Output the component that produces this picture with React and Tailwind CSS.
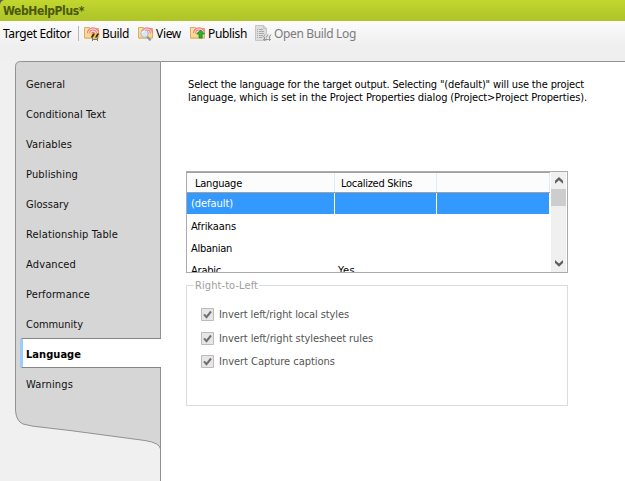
import { useLayoutEffect, useRef, useState } from "react";

// Single-line label whose tracking is adjusted so that it spans `w` pixels.
function Label({ w, className = "", children }) {
  const ref = useRef(null);
  const [spacing, setSpacing] = useState(0);
  useLayoutEffect(() => {
    const natural = ref.current.getBoundingClientRect().width;
    setSpacing((s) => s + (w - natural) / ref.current.textContent.length);
  }, [w]);
  return (
    <span ref={ref} className={`inline-block shrink-0 whitespace-pre ${className}`} style={{ letterSpacing: spacing }}>
      {children}
    </span>
  );
}

function Folder({ children }) {
  return (
    <svg className="h-4 w-4 shrink-0" viewBox="0 0 16 16">
      <path d="M.5 2.5h5l1 1h8v9.5H.5z" fill="#f8dfa2" stroke="#dcae62" />
      <path d="M2.8 8.5a6.2 6.2 0 0 1 12.4 0z" fill="#f47c80" />
      <path d="M4 8.5a5 5 0 0 1 10 0z" fill="#fde0de" />
      <path d="M5 8.5a4 4 0 0 1 8 0z" fill="#f47c80" />
      <path d="M6.1 8.5a2.9 2.9 0 0 1 5.8 0z" fill="#fde0de" />
      <path d="M7.2 8.5a1.8 1.8 0 0 1 3.6 0z" fill="#f0656b" />
      <path d="M1 8.5h13.5V13H1z" fill="#f6d88f" />
      <path d="M.5 13h14V8" fill="none" stroke="#dcae62" />
      {children}
    </svg>
  );
}

function BuildIcon() {
  return (
    <Folder>
      <path d="M8.5 12v4M13.5 12v4M8 14.5h6" stroke="#777" fill="none" />
      <path d="M7 8.5h8.5v4H7z" fill="#f5c63a" />
      <path d="M7 12l2-3.5h2L8.8 12.5H7zM11 12.5l2.2-4h2l-2.2 4z" fill="#292929" />
    </Folder>
  );
}

function ViewIcon() {
  return (
    <Folder>
      <path d="M9 11.5l3.5 4" stroke="#8f959d" strokeWidth="2" />
      <circle cx="6.5" cy="8.6" r="3.7" fill="#d9e6f3" stroke="#b4bcc6" />
      <path d="M4.3 8a2.5 2.5 0 0 1 2.4-2" fill="none" stroke="#fff" />
    </Folder>
  );
}

function PublishIcon() {
  return (
    <Folder>
      <path d="M10.5 5l4 4h-2.3v4H9V9H6.7z" fill="#23b52d" stroke="#11821b" strokeWidth=".7" />
    </Folder>
  );
}

function LogIcon() {
  return (
    <svg className="h-[17px] w-[17px] shrink-0" viewBox="0 0 17 17">
      <path d="M.5.5h8l3 3v12H.5z" fill="#dedede" stroke="#c4c4c4" />
      <path d="M8.5.5v3h3" fill="none" stroke="#c4c4c4" />
      <path d="M2 4.5h1M4 4.5h4M2 6.5h1M4 6.5h5M2 8.5h1M4 8.5h5M2 10.5h1M4 10.5h4M2 12.5h1M4 12.5h3" stroke="#aaa" />
      <path d="M8 9.5h8v3H8z" fill="#e2e2e2" />
      <path d="M8 12.5l2-3M11 12.5l2-3M14 12.5l2-3M9.5 12v4M14.5 12v4M8 14.5h8" stroke="#999" />
    </svg>
  );
}

const nav = [
  ["General", 39],
  ["Conditional Text", 80],
  ["Variables", 46],
  ["Publishing", 52],
  ["Glossary", 43],
  ["Relationship Table", 92],
  ["Advanced", 50],
  ["Performance", 64],
  ["Community", 57],
  ["Language", 55],
  ["Warnings", 47],
];

function Sidebar() {
  return (
    <nav className="relative h-[420px] w-[146px] shrink-0">
      <svg className="absolute inset-0 h-[420px] w-[146px]" viewBox="0 0 146 420">
        <path
          d="M145.5 .5H5.5Q.5 .5 .5 5.5V349Q1 360 8 363L18 365.2L55 369.5L130 379.5Q145 382 145.5 388"
          fill="#d6d6d6"
          stroke="#919191"
        />
        <path d="M145.5 .5V420" stroke="#919191" />
      </svg>
      <div className="relative flex flex-col pt-2">
        {nav.map(([name, w]) =>
          name === "Language" ? (
            <div
              key={name}
              className="-mt-px mb-px ml-[5px] flex h-[30px] items-center rounded-l-[3px] border-y border-[#858585] bg-white"
            >
              <span className="h-[28px] w-[3px] rounded-l-[2px] bg-[#99ccff]" />
              <Label w={w} className="ml-[3px] pt-[2px] font-bold text-black">{name}</Label>
            </div>
          ) : (
            <div key={name} className="flex h-[30px] items-center pl-[11px]">
              <Label w={w}>{name}</Label>
            </div>
          )
        )}
      </div>
    </nav>
  );
}

function Chevron({ down }) {
  return (
    <svg className="h-[7px] w-[8px]" viewBox="0 0 8 7">
      <path d={down ? "M0 0l4 3.6L8 0v3L4 6.8 0 3z" : "M0 6.8l4-3.6 4 3.6v-3L4 0 0 3.8z"} fill="#606060" />
    </svg>
  );
}

function LanguageList() {
  return (
    <div className="flex h-[102px] w-[382px] overflow-hidden border border-[#a9abb0] bg-white">
      <div className="w-[363px] shrink-0 overflow-hidden">
        <div className="flex h-[21px] border-b border-t border-[#a0a0a0] bg-[#fcfcfc]">
          <div className="flex w-[148px] items-center border-r border-[#dfebf7] pl-2 pt-px"><Label w={47}>Language</Label></div>
          <div className="flex w-[102px] items-center border-r border-[#dfebf7] pl-[6px] pt-px"><Label w={71}>Localized Skins</Label></div>
          <div className="grow border-r border-[#dfebf7]" />
        </div>
        <div className="flex h-[21px] w-[362px] gap-px text-white">
          <div className="flex w-[147px] items-center bg-[#3399ff] pl-[4px]"><Label w={42}>(default)</Label></div>
          <div className="w-[101px] bg-[#3399ff]" />
          <div className="grow bg-[#3399ff]" />
        </div>
        <div className="flex h-[23px] items-center pl-[4px] pt-px"><Label w={45}>Afrikaans</Label></div>
        <div className="flex h-[22px] items-center pl-[4px]"><Label w={41}>Albanian</Label></div>
        <div className="flex h-[22px] items-center pl-[4px]">
          <Label w={30}>Arabic</Label>
          <span className="ml-[117px]"><Label w={17}>Yes</Label></span>
        </div>
      </div>
      <div className="ml-px flex w-[15px] shrink-0 flex-col items-center bg-[#f0f0f0]">
        <div className="flex h-[17px] items-center"><Chevron /></div>
        <div className="h-[17px] w-full bg-[#cdcdcd]" />
        <div className="mt-auto flex h-[17px] items-center"><Chevron down /></div>
      </div>
    </div>
  );
}

function Check({ w, children }) {
  return (
    <div className="flex h-[13px] items-center gap-[5px]">
      <svg className="h-[13px] w-[13px] shrink-0" viewBox="0 0 13 13">
        <path d="M.5.5h12v12H.5z" fill="#e6e6e6" stroke="#bcbcbc" />
        <path d="M3 6.3l2.5 2.8L10 3.5" fill="none" stroke="#6f6f6f" strokeWidth="2" />
      </svg>
      <Label w={w}>{children}</Label>
    </div>
  );
}

export default function App() {
  return (
    <div className="flex h-[481px] w-[625px] flex-col overflow-hidden bg-[#f0f0f0] font-['DejaVu_Sans_Condensed','DejaVu_Sans',sans-serif] text-[11px] leading-[13px] text-[#111] [font-stretch:condensed]">
      <div className="bg-[#5a5a5a]">
        <div className="flex h-[21px] items-center rounded-tl-[5px] bg-linear-to-b from-[#c2d72e] to-[#adc328] pl-[3px] pt-px">
          <Label w={81} className="text-[12px] font-bold text-[#4b5810]">WebHelpPlus*</Label>
        </div>
      </div>
      <div className="flex h-10 shrink-0 items-start bg-linear-to-b from-[#fbfbfb] to-[#efefef] to-60% pl-[3px] font-['Noto_Sans',sans-serif] text-[12px] text-black [font-stretch:normal]">
        <div className="flex h-6 items-center">
          <Label w={68}>Target Editor</Label>
          <span className="ml-[7px] h-[15px] w-px bg-[#b8b8b8]" />
          <span className="ml-[5px] flex items-center gap-[2px]"><BuildIcon /><Label w={27}>Build</Label></span>
          <span className="ml-[9px] flex items-center gap-[2px]"><ViewIcon /><Label w={25}>View</Label></span>
          <span className="ml-[9px] flex items-center gap-[2px]"><PublishIcon /><Label w={39}>Publish</Label></span>
          <span className="ml-[8px] flex items-center gap-[2px] text-[#7c7c7c]"><LogIcon /><Label w={82}>Open Build Log</Label></span>
        </div>
      </div>
      <div className="flex h-[420px] shrink-0 pl-[15px]">
        <Sidebar />
        <main className="grow border-t border-[#919191] bg-white pl-[25px] pt-[16px]">
          <div className="flex flex-col items-start pl-[2px] text-black">
            <Label w={396}>{'Select the language for the target output. Selecting "(default)" will use the project'}</Label>
            <Label w={399}>{"language, which is set in the Project Properties dialog (Project>Project Properties)."}</Label>
          </div>
          <div className="mt-[67px] text-black"><LanguageList /></div>
          <fieldset className="mt-[6px] h-[127px] w-[382px] border border-[#dcdcdc] pl-[14px] text-[#555]">
            <legend className="-ml-[7px] px-px text-[#9e9e9e]"><Label w={63}>Right-to-Left</Label></legend>
            <div className="mt-[16px] flex flex-col gap-[10.5px]">
              <Check w={130}>Invert left/right local styles</Check>
              <Check w={154}>Invert left/right stylesheet rules</Check>
              <Check w={116}>Invert Capture captions</Check>
            </div>
          </fieldset>
        </main>
      </div>
    </div>
  );
}
